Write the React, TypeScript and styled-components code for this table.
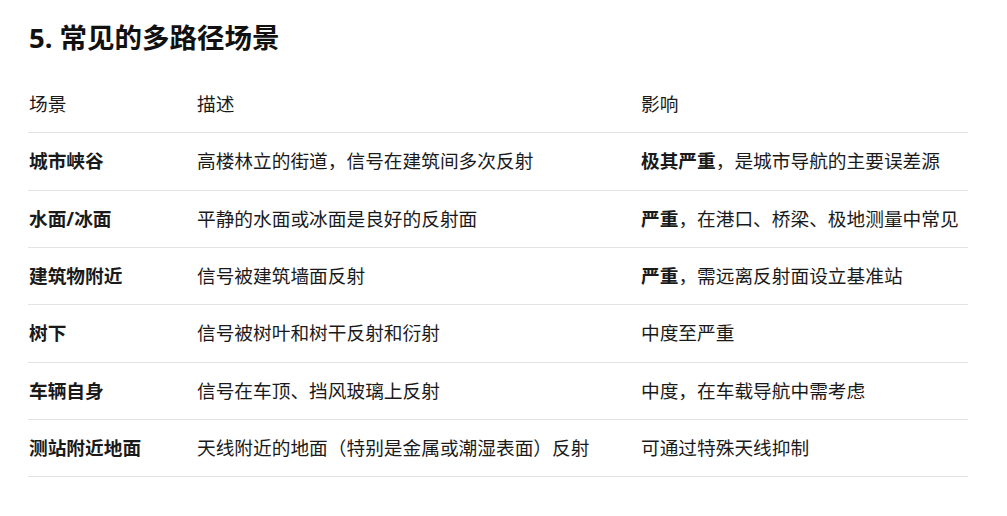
import { Fragment } from "react";
import styled, { createGlobalStyle } from "styled-components";

const GlobalStyle = createGlobalStyle`
  body {
    margin: 0;
    background: #ffffff;
    color: #1a1a1a;
    font-family: "Noto Sans", "Noto Sans CJK SC", sans-serif;
  }
`;

const Page = styled.div`
  padding: 18px 28px 0 28px;
  width: 940px;
`;

const Title = styled.h2`
  margin: 0 0 18px 1px;
  font-size: 27.5px;
  line-height: 40px;
  font-weight: 700;
  color: #111;
`;

const Table = styled.div`
  display: grid;
  grid-template-columns: 168px 444px 1fr;
`;

const Cell = styled.div<{ $bold?: boolean }>`
  display: flex;
  align-items: center;
  height: 57.33px;
  box-sizing: border-box;
  padding-left: 1px;
  font-size: 18.7px;
  line-height: 26px;
  font-weight: ${(p) => (p.$bold ? 700 : 400)};
  border-bottom: 1px solid #e3e3e3;
  white-space: nowrap;
  color: #1a1a1a;
`;

const Strong = styled.strong`
  font-weight: 700;
`;

type Row = { scene: string; desc: string; strong?: string; rest: string };

const rows: Row[] = [
  { scene: "城市峡谷", desc: "高楼林立的街道，信号在建筑间多次反射", strong: "极其严重", rest: "，是城市导航的主要误差源" },
  { scene: "水面/冰面", desc: "平静的水面或冰面是良好的反射面", strong: "严重", rest: "，在港口、桥梁、极地测量中常见" },
  { scene: "建筑物附近", desc: "信号被建筑墙面反射", strong: "严重", rest: "，需远离反射面设立基准站" },
  { scene: "树下", desc: "信号被树叶和树干反射和衍射", rest: "中度至严重" },
  { scene: "车辆自身", desc: "信号在车顶、挡风玻璃上反射", rest: "中度，在车载导航中需考虑" },
  { scene: "测站附近地面", desc: "天线附近的地面（特别是金属或潮湿表面）反射", rest: "可通过特殊天线抑制" },
];

export default function App() {
  return (
    <Page>
      <GlobalStyle />
      <Title>5. 常见的多路径场景</Title>
      <Table>
        <Cell>场景</Cell>
        <Cell>描述</Cell>
        <Cell>影响</Cell>
        {rows.map((r) => (
          <Fragment key={r.scene}>
            <Cell $bold>{r.scene}</Cell>
            <Cell>{r.desc}</Cell>
            <Cell>
              <span>
                {r.strong && <Strong>{r.strong}</Strong>}
                {r.rest}
              </span>
            </Cell>
          </Fragment>
        ))}
      </Table>
    </Page>
  );
}
